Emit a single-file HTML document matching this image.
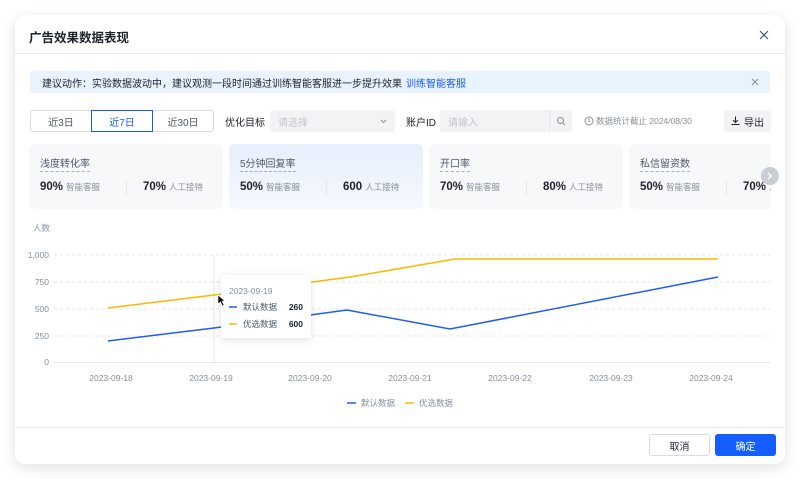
<!DOCTYPE html>
<html><head><meta charset="utf-8"><style>
*{box-sizing:border-box;margin:0;padding:0}
body{width:801px;height:479px;background:#fff;font-family:"Liberation Sans","Noto Sans CJK SC",sans-serif;position:relative;overflow:hidden;color:#1d2129}
.modal{position:absolute;left:15px;top:15px;width:770px;height:449px;background:#fff;border-radius:10px;box-shadow:0 4px 14px rgba(0,0,0,.12);overflow:hidden}
.abs{position:absolute}
.title{left:14px;top:12px;font-size:12.5px;font-weight:bold}
.hline{left:0;width:770px;height:1px;background:#e5e6eb}
.alert{left:15px;top:56px;width:740px;height:22px;background:#e8f3ff;border-radius:3px;font-size:10px;display:flex;align-items:center;padding-left:12px;color:#1d2129}
.alert a{color:#165dff;margin-left:4px}
.seg{left:15px;top:95px;width:184px;height:22px;border:1px solid #d9dbe0;border-radius:3px;display:flex;font-size:10px}
.seg div{flex:1;display:flex;align-items:center;justify-content:center;color:#4e5969}
.seg .on{border:1px solid #165dff;color:#165dff;margin:-1px 0}
.lbl{font-size:10px;color:#1d2129;top:95px;height:22px;display:flex;align-items:center}
.inp{top:95px;height:22px;background:#f2f3f5;border-radius:3px;font-size:10px;color:#c0c4cc;display:flex;align-items:center;padding-left:8px}
.card{top:129px;width:194px;height:65px;background:#f7f8fa;border-radius:6px;white-space:nowrap}
.card .t{position:absolute;left:11px;top:11px;font-size:10px;color:#4e5969;border-bottom:1px dashed #a9aeb8;padding-bottom:1px}
.card .v{position:absolute;top:37px;font-size:11.5px;font-weight:bold}
.card .v span{font-size:8.5px;color:#86909c;font-weight:normal;margin-left:3px}
.card .sep{position:absolute;left:97px;top:37px;width:1px;height:14px;background:#e5e6eb}
.btn{top:419px;height:22px;width:61px;border-radius:3px;font-size:10px;display:flex;align-items:center;justify-content:center}
</style></head><body>
<div class="modal">
<div class="abs title">广告效果数据表现</div>
<svg class="abs" style="left:743px;top:14px" width="12" height="12"><path d="M2 2L10 10M10 2L2 10" stroke="#4e5969" stroke-width="1.2"/></svg>
<div class="abs hline" style="top:38px"></div>
<div class="abs alert">建议动作：实验数据波动中，建议观测一段时间通过训练智能客服进一步提升效果<a>训练智能客服</a>
<svg class="abs" style="left:721px;top:7px" width="8" height="8"><path d="M1 1L7 7M7 1L1 7" stroke="#86909c" stroke-width="1"/></svg></div>
<div class="abs seg"><div>近3日</div><div class="on">近7日</div><div>近30日</div></div>
<div class="abs lbl" style="left:210px">优化目标</div>
<div class="abs inp" style="left:255px;width:125px">请选择<svg class="abs" style="left:110px;top:9px" width="7" height="5"><path d="M1 1L3.5 3.5L6 1" stroke="#86909c" fill="none"/></svg></div>
<div class="abs lbl" style="left:391px">账户ID</div>
<div class="abs inp" style="left:425px;width:132px">请输入<div class="abs" style="left:109px;top:0;width:1px;height:22px;background:#e5e6eb"></div><svg class="abs" style="left:116px;top:6px" width="10" height="10"><circle cx="4.5" cy="4.5" r="3" stroke="#86909c" fill="none"/><path d="M7 7L9 9" stroke="#86909c"/></svg></div>
<svg class="abs" style="left:569px;top:101px" width="10" height="10"><circle cx="5" cy="5" r="4" stroke="#86909c" fill="none"/><path d="M5 2.5V5L6.5 6" stroke="#86909c" fill="none"/></svg>
<div class="abs" style="left:581px;top:95px;height:22px;display:flex;align-items:center;font-size:8.5px;color:#86909c">数据统计截止 2024/08/30</div>
<div class="abs" style="left:709px;top:95px;width:47px;height:22px;background:#f2f3f5;border-radius:3px;font-size:10px;display:flex;align-items:center;padding-left:20px">导出<svg class="abs" style="left:7px;top:6px" width="9" height="9"><path d="M4.5 0.5V6M2 4L4.5 6.5L7 4M0.5 8.5H8.5" stroke="#1d2129" fill="none"/></svg></div>
<div class="abs card" style="left:14px"><div class="t">浅度转化率</div><div class="v" style="left:11px">90%<span>智能客服</span></div><div class="sep"></div><div class="v" style="left:114px">70%<span>人工接待</span></div></div>
<div class="abs card" style="left:214px;background:linear-gradient(180deg,#e8effc,#f5f8fe)"><div class="t">5分钟回复率</div><div class="v" style="left:11px">50%<span>智能客服</span></div><div class="sep"></div><div class="v" style="left:114px">600<span>人工接待</span></div></div>
<div class="abs card" style="left:414px"><div class="t">开口率</div><div class="v" style="left:11px">70%<span>智能客服</span></div><div class="sep"></div><div class="v" style="left:114px">80%<span>人工接待</span></div></div>
<div class="abs card" style="left:614px;width:142px;border-radius:6px 0 0 6px;overflow:hidden"><div class="t">私信留资数</div><div class="v" style="left:11px">50%<span>智能客服</span></div><div class="sep"></div><div class="v" style="left:114px">70%<span>人工接待</span></div></div>
<div class="abs" style="left:746px;top:152px;width:18px;height:18px;border-radius:50%;background:#c9cdd4"><svg class="abs" style="left:6px;top:5px" width="6" height="8"><path d="M1 1L4.5 4L1 7" stroke="#fff" stroke-width="1.3" fill="none"/></svg></div>
<div class="abs hline" style="top:412px"></div>
<div class="abs btn" style="left:634px;border:1px solid #d9dbe0;color:#1d2129">取消</div>
<div class="abs btn" style="left:700px;background:#165dff;color:#fff">确定</div>
</div>
<svg class="abs" style="left:0;top:0" width="801" height="479" font-family="Liberation Sans" font-size="8.5" fill="#86909c">
<text x="33" y="231" font-family="Noto Sans CJK SC">人数</text>
<g stroke="#e5e6eb" stroke-dasharray="3 3"><path d="M54 255H770M54 282H770M54 309H770M54 336H770"/></g>
<path d="M54 362.5H770" stroke="#e5e6eb"/>
<path d="M214 255V362" stroke="#e5e6eb"/>
<g text-anchor="end"><text x="49" y="258">1,000</text><text x="49" y="285">750</text><text x="49" y="312">500</text><text x="49" y="339">250</text><text x="49" y="365">0</text></g>
<g text-anchor="middle"><text x="111" y="381">2023-09-18</text><text x="211" y="381">2023-09-19</text><text x="310" y="381">2023-09-20</text><text x="410" y="381">2023-09-21</text><text x="510" y="381">2023-09-22</text><text x="611" y="381">2023-09-23</text><text x="711" y="381">2023-09-24</text></g>
<polyline points="108,308 214,295 350,277 455,259 718,259" fill="none" stroke="#fbb800" stroke-width="1.5"/>
<polyline points="108,341 214,328 347,310 450,329 718,277" fill="none" stroke="#1f5cf5" stroke-width="1.5"/>
<rect x="221" y="275" width="90" height="63" fill="#fff" style="filter:drop-shadow(0 2px 4px rgba(0,0,0,.12))"/>
<text x="229" y="294">2023-09-19</text>
<path d="M229 307H237" stroke="#1f5cf5" stroke-width="1.5"/><path d="M229 324H237" stroke="#fbb800" stroke-width="1.5"/>
<g fill="#4e5969" font-family="Noto Sans CJK SC"><text x="243" y="310">默认数据</text><text x="243" y="327">优选数据</text></g>
<g fill="#1d2129" text-anchor="end" font-weight="bold"><text x="303" y="310">260</text><text x="303" y="327">600</text></g>
<path d="M218 295L218 304L220.5 302L222.5 306L224 305L222 301L225 301Z" fill="#000" stroke="#fff" stroke-width=".6"/>
<path d="M347 403H356" stroke="#1f5cf5" stroke-width="1.5"/><path d="M405 403H414" stroke="#fbb800" stroke-width="1.5"/>
<g font-family="Noto Sans CJK SC"><text x="361" y="406">默认数据</text><text x="419" y="406">优选数据</text></g>
</svg>
</body></html>
